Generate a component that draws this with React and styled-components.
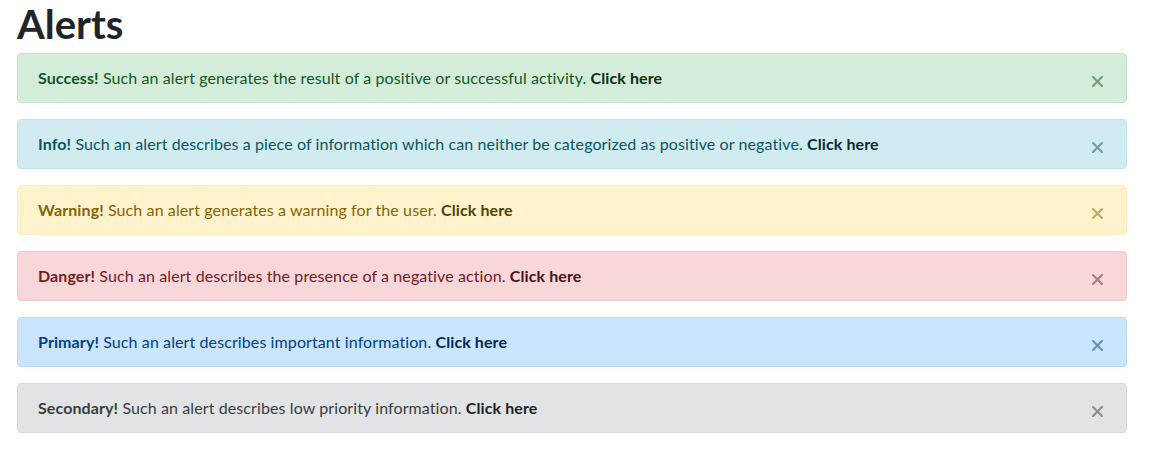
import React from 'react';
import styled, { createGlobalStyle } from 'styled-components';

const GlobalStyle = createGlobalStyle`
  body {
    margin: 0;
    background: #fff;
    font-family: Lato, "Open Sans", sans-serif;
    font-size: 16px;
    line-height: 1.5;
    color: #212529;
  }
`;

const Page = styled.div`
  width: 1110px;
  margin-left: 17px;
`;

const Title = styled.h1`
  margin: 0 0 5px;
  font-size: 40px;
  font-weight: 700;
  line-height: 48px;
  color: #212529;
`;

const variants = {
  success: { bg: '#d4edda', border: '#c3e6cb', text: '#155724', link: '#0b2e13' },
  info: { bg: '#d1ecf1', border: '#bee5eb', text: '#0c5460', link: '#062c33' },
  warning: { bg: '#fff3cd', border: '#ffeeba', text: '#856404', link: '#533f03' },
  danger: { bg: '#f8d7da', border: '#f5c6cb', text: '#721c24', link: '#491217' },
  primary: { bg: '#cce5ff', border: '#b8daff', text: '#004085', link: '#002752' },
  secondary: { bg: '#e2e3e5', border: '#d6d8db', text: '#383d41', link: '#202326' },
};

const Alert = styled.div`
  display: flex;
  align-items: center;
  justify-content: space-between;
  margin-bottom: 16px;
  padding: 12px 23px 12px 20px;
  border: 1px solid ${p => variants[p.$type].border};
  border-radius: 4px;
  background: ${p => variants[p.$type].bg};
  color: ${p => variants[p.$type].text};
`;

const Message = styled.div`
  line-height: 24px;
  letter-spacing: 0.1px;

  strong {
    font-weight: 700;
  }
`;

const AlertLink = styled.a`
  font-weight: 700;
  color: ${p => variants[p.$type].link};
  text-decoration: none;
  cursor: pointer;
`;

const Close = styled.button`
  box-sizing: border-box;
  display: flex;
  align-items: flex-start;
  justify-content: center;
  width: 11px;
  height: 24px;
  padding: 10px 0 0;
  border: 0;
  background: transparent;
  color: inherit;
  opacity: 0.5;
  cursor: pointer;

  svg {
    display: block;
    flex-shrink: 0;
  }
`;

const alerts = [
  { type: 'success', label: 'Success!', text: 'Such an alert generates the result of a positive or successful activity.' },
  { type: 'info', label: 'Info!', text: 'Such an alert describes a piece of information which can neither be categorized as positive or negative.' },
  { type: 'warning', label: 'Warning!', text: 'Such an alert generates a warning for the user.' },
  { type: 'danger', label: 'Danger!', text: 'Such an alert describes the presence of a negative action.' },
  { type: 'primary', label: 'Primary!', text: 'Such an alert describes important information.' },
  { type: 'secondary', label: 'Secondary!', text: 'Such an alert describes low priority information.' },
];

const CloseIcon = () => (
  <svg width="11" height="11" viewBox="0 0 11 11" aria-hidden="true">
    <path d="M1 1 L10 10 M10 1 L1 10" stroke="currentColor" strokeWidth="2.2" strokeLinecap="square" />
  </svg>
);

const App = () => (
  <>
    <GlobalStyle />
    <Page>
      <Title>Alerts</Title>
      {alerts.map(a => (
        <Alert key={a.type} $type={a.type}>
          <Message>
            <strong>{a.label}</strong> {a.text} <AlertLink $type={a.type}>Click here</AlertLink>
          </Message>
          <Close aria-label="Close">
            <CloseIcon />
          </Close>
        </Alert>
      ))}
    </Page>
  </>
);

export default App;
